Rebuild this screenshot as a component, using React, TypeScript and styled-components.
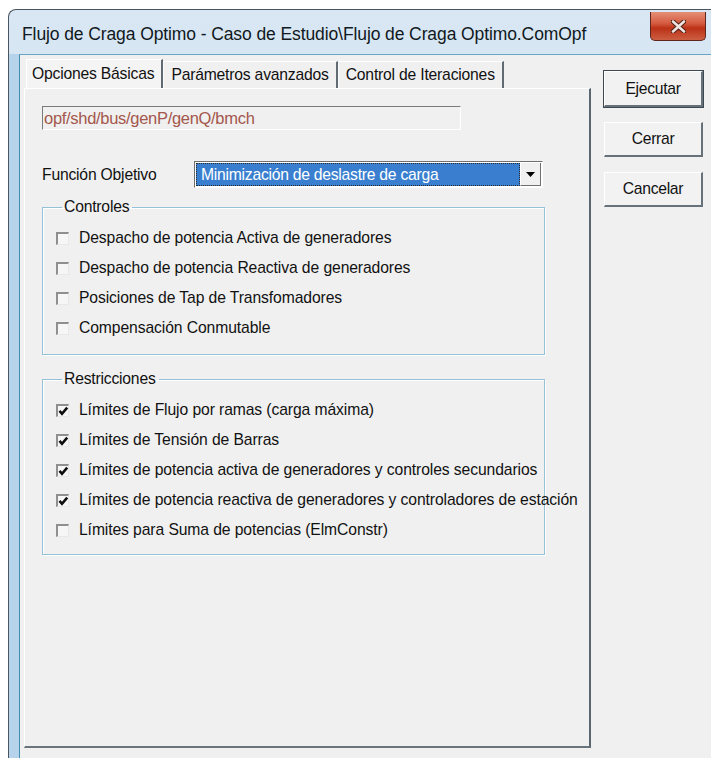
import React from "react";
import styled, { createGlobalStyle } from "styled-components";

const Global = createGlobalStyle`
  html, body { margin: 0; padding: 0; background: #ffffff; overflow: hidden; }
  body { font-family: "Liberation Sans", Arial, sans-serif; }
`;

const Window = styled.div`
  margin: 9px 0 0 8px;
  width: 720px;
  height: 760px;
  border-top: 1px solid #4a5560;
  border-left: 1px solid #4a5560;
  border-top-left-radius: 8px;
  background: linear-gradient(180deg, #d9e7f4 0%, #cfe1f1 40%, #c6dbee 100%);
  display: flex;
  flex-direction: column;
  box-sizing: border-box;
  overflow: hidden;
`;

const TitleBar = styled.div`
  height: 44px;
  display: flex;
  align-items: flex-start;
  flex-shrink: 0;
`;

const Title = styled.div`
  flex: 1;
  padding: 14px 0 0 13px;
  font-family: "Liberation Sans", Arial, sans-serif;
  font-size: 17.5px;
  color: #101820;
  letter-spacing: -0.1px;
`;

const CloseButton = styled.div`
  width: 56px;
  height: 29px;
  margin: 2px 22px 0 0;
  border: 1px solid #5e261c;
  border-top: none;
  border-radius: 0 0 5px 5px;
  background: linear-gradient(180deg, #e49077 0%, #d4583d 42%, #bb3217 58%, #cd5e42 100%);
  display: flex;
  align-items: center;
  justify-content: center;
  box-sizing: border-box;
`;

const Frame = styled.div`
  flex: 1;
  display: flex;
  padding-left: 10px;
  background: linear-gradient(90deg, #b7d3ec 0%, #a8cbe9 100%);
`;

const Client = styled.div`
  flex: 1;
  display: flex;
  align-items: flex-start;
  background: #f0f0f0;
  border-left: 1px solid #3e8fb0;
  border-top: 1px solid #6aa6c4;
  padding: 4px 0 0 4px;
`;

const TabArea = styled.div`
  width: 567px;
  display: flex;
  flex-direction: column;
`;

const TabStrip = styled.div`
  display: flex;
  height: 29px;
  align-items: stretch;
  padding-left: 2px;
`;

const Tab = styled.div<{ $active?: boolean }>`
  display: flex;
  align-items: center;
  padding: 0 7px 0 ${(p) => (p.$active ? 5 : 7)}px;
  font-size: 15.7px;
  color: #111;
  background: ${(p) => (p.$active ? "#f4f4f4" : "#f0f0f0")};
  border-left: 1px solid ${(p) => (p.$active ? "#ffffff" : "#fafafa")};
  border-top: 1px solid #ffffff;
  border-right: 2px solid #5f6a72;
  margin-top: ${(p) => (p.$active ? 0 : 2)}px;
  letter-spacing: -0.2px;
`;

const Panel = styled.div`
  height: 660px;
  border-left: 1px solid #ffffff;
  border-top: 1px solid #ffffff;
  border-right: 2px solid #5b6770;
  border-bottom: 2px solid #6a747c;
  padding: 17px 0 0 17px;
  display: flex;
  flex-direction: column;
  box-sizing: border-box;
`;

const PathField = styled.div`
  width: 419px;
  height: 24px;
  box-sizing: border-box;
  border-left: 1px solid #7b7b7b;
  border-top: 1px solid #7b7b7b;
  border-right: 1px solid #ffffff;
  border-bottom: 1px solid #ffffff;
  background: #f0f0f0;
  color: #a4574c;
  font-size: 16.5px;
  display: flex;
  align-items: center;
  padding-left: 1px;
  letter-spacing: -0.3px;
`;

const FieldRow = styled.div`
  display: flex;
  align-items: center;
  margin-top: 31px;
`;

const Label = styled.div`
  width: 152px;
  font-size: 15.7px;
  color: #111;
  letter-spacing: -0.2px;
`;

const Combo = styled.div`
  width: 349px;
  height: 27px;
  box-sizing: border-box;
  border-left: 1px solid #6f6f6f;
  border-top: 1px solid #6f6f6f;
  border-right: 1px solid #ffffff;
  border-bottom: 1px solid #ffffff;
  background: #ffffff;
  display: flex;
  padding: 1px;
`;

const ComboValue = styled.div`
  flex: 1;
  background: #3a7fcf;
  outline: 1px dotted #2a2a2a;
  outline-offset: -1px;
  color: #ffffff;
  font-size: 15.7px;
  display: flex;
  align-items: center;
  padding-left: 5px;
  letter-spacing: -0.25px;
`;

const ComboArrow = styled.div`
  width: 21px;
  background: #f0f0f0;
  border-right: 1px solid #707070;
  border-bottom: 1px solid #707070;
  border-left: 1px solid #ffffff;
  display: flex;
  align-items: center;
  justify-content: center;
  box-sizing: border-box;
`;

const Group = styled.fieldset<{ $height: number }>`
  margin: 0;
  min-width: 0;
  width: 503px;
  height: ${(p) => p.$height}px;
  box-sizing: border-box;
  border: 1px solid #94c0d8;
  box-shadow: inset 1px 1px 0 #ffffff, 1px 1px 0 #ffffff;
  padding: 7px 0 0 13px;
  display: flex;
  flex-direction: column;
  overflow: visible;
`;

const Legend = styled.legend`
  font-size: 15.7px;
  color: #111;
  padding: 0 3px 0 2px;
  margin-left: 6px;
  letter-spacing: -0.2px;
`;

const GroupWrap = styled.div<{ $top: number }>`
  margin-top: ${(p) => p.$top}px;
`;

const CheckRow = styled.div`
  display: flex;
  align-items: center;
  height: 30px;
  white-space: nowrap;
`;

const Box = styled.div`
  width: 13px;
  height: 13px;
  box-sizing: border-box;
  border-left: 2px solid #8f8f8f;
  border-top: 2px solid #8f8f8f;
  border-right: 1px solid #e8e8e8;
  border-bottom: 1px solid #e8e8e8;
  background: #f6f6f6;
  margin-right: 10px;
  position: relative;
  flex-shrink: 0;
`;

const CheckText = styled.span`
  font-size: 15.7px;
  color: #121212;
  letter-spacing: -0.1px;
`;

const ButtonColumn = styled.div`
  display: flex;
  flex-direction: column;
  gap: 15px;
  padding: 12px 0 0 13px;
`;

const Button = styled.div<{ $default?: boolean }>`
  width: 99px;
  height: ${(p) => (p.$default ? 36 : 35)}px;
  box-sizing: border-box;
  display: flex;
  align-items: center;
  justify-content: center;
  font-size: 15.7px;
  color: #111;
  background: #f2f2f2;
  border-top: 1px solid #ffffff;
  border-left: 1px solid #ffffff;
  border-right: 2px solid #66717a;
  border-bottom: 2px solid #66717a;
  outline: ${(p) => (p.$default ? "1px solid #3d4850" : "none")};
  letter-spacing: -0.3px;
`;

const Check = ({ on }: { on: boolean }) => (
  <Box>
    {on && (
      <svg width="11" height="11" viewBox="0 0 11 11" style={{ position: "absolute", left: 0, top: 0 }}>
        <path d="M1.5 4.8 L4 7.8 L9.2 1.6" fill="none" stroke="#0d0d0d" strokeWidth="2.6" />
      </svg>
    )}
  </Box>
);

const controles = [
  "Despacho de potencia Activa de generadores",
  "Despacho de potencia Reactiva de generadores",
  "Posiciones de Tap de Transfomadores",
  "Compensación Conmutable",
];

const restricciones: [string, boolean][] = [
  ["Límites de Flujo por ramas (carga máxima)", true],
  ["Límites de Tensión de Barras", true],
  ["Límites de potencia activa de generadores y controles secundarios", true],
  ["Límites de potencia reactiva de generadores y controladores de estación", true],
  ["Límites para Suma de potencias (ElmConstr)", false],
];

export default function App() {
  return (
    <>
      <Global />
      <Window>
        <TitleBar>
          <Title>Flujo de Craga Optimo - Caso de Estudio\Flujo de Craga Optimo.ComOpf</Title>
          <CloseButton>
            <svg width="15" height="13" viewBox="0 0 15 13">
              <path d="M2 1.5 L13 11.5 M13 1.5 L2 11.5" stroke="#4e2018" strokeWidth="4.6" strokeLinecap="round" />
              <path d="M2 1.5 L13 11.5 M13 1.5 L2 11.5" stroke="#efe3df" strokeWidth="2.6" strokeLinecap="round" />
            </svg>
          </CloseButton>
        </TitleBar>
        <Frame>
          <Client>
            <TabArea>
              <TabStrip>
                <Tab $active>Opciones Básicas</Tab>
                <Tab>Parámetros avanzados</Tab>
                <Tab>Control de Iteraciones</Tab>
              </TabStrip>
              <Panel>
                <PathField>opf/shd/bus/genP/genQ/bmch</PathField>
                <FieldRow>
                  <Label>Función Objetivo</Label>
                  <Combo>
                    <ComboValue>Minimización de deslastre de carga</ComboValue>
                    <ComboArrow>
                      <svg width="9" height="5" viewBox="0 0 9 5">
                        <path d="M0 0 H9 L4.5 5 Z" fill="#000" />
                      </svg>
                    </ComboArrow>
                  </Combo>
                </FieldRow>
                <GroupWrap $top={10}>
                  <Group $height={157}>
                    <Legend>Controles</Legend>
                    {controles.map((t) => (
                      <CheckRow key={t}>
                        <Check on={false} />
                        <CheckText>{t}</CheckText>
                      </CheckRow>
                    ))}
                  </Group>
                </GroupWrap>
                <GroupWrap $top={15}>
                  <Group $height={185}>
                    <Legend>Restricciones</Legend>
                    {restricciones.map(([t, on]) => (
                      <CheckRow key={t}>
                        <Check on={on} />
                        <CheckText>{t}</CheckText>
                      </CheckRow>
                    ))}
                  </Group>
                </GroupWrap>
              </Panel>
            </TabArea>
            <ButtonColumn>
              <Button $default>Ejecutar</Button>
              <Button>Cerrar</Button>
              <Button>Cancelar</Button>
            </ButtonColumn>
          </Client>
        </Frame>
      </Window>
    </>
  );
}
